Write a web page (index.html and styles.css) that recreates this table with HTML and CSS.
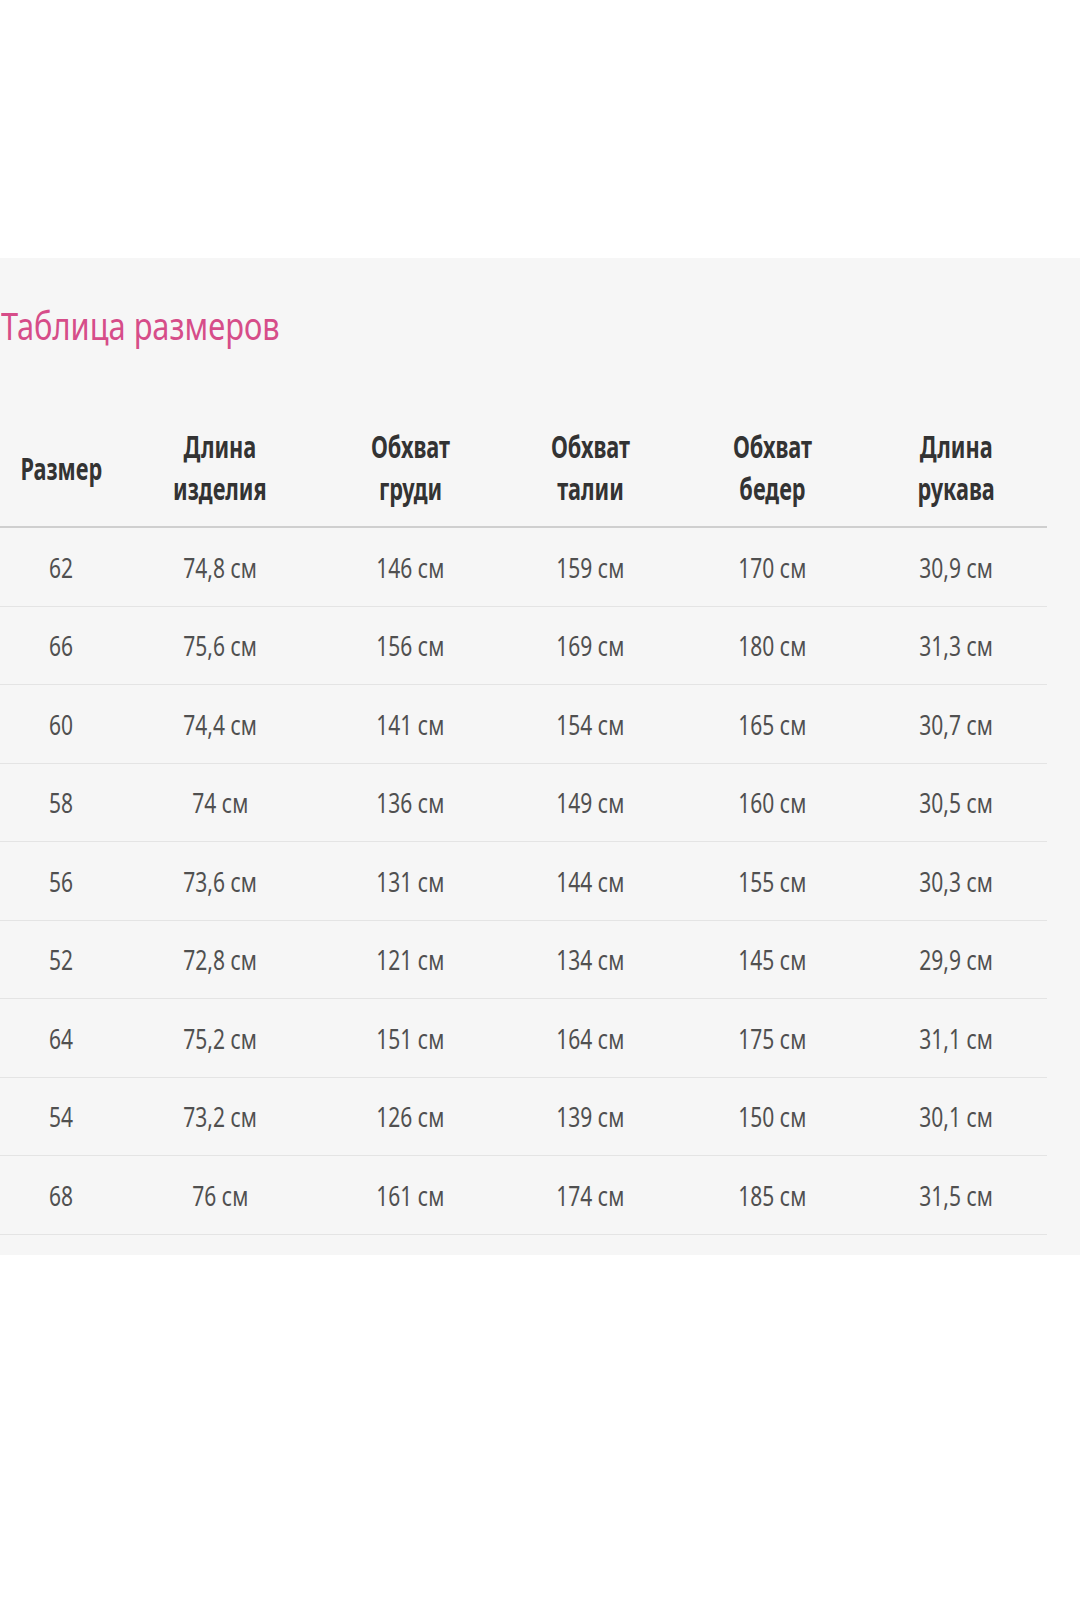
FILE: index.html
```html
<!DOCTYPE html>
<html lang="ru">
<head>
<meta charset="utf-8">
<title>Таблица размеров</title>
<link rel="stylesheet" href="styles.css">
</head>
<body>
<div class="page">
  <section class="panel">
    <h2 class="title"><span class="narrow">Таблица размеров</span></h2>
    <div class="table">
      <div class="row head">
        <div class="cell single"><span class="t">Размер</span></div>
        <div class="cell"><span class="t">Длина<br>изделия</span></div>
        <div class="cell"><span class="t">Обхват<br>груди</span></div>
        <div class="cell"><span class="t">Обхват<br>талии</span></div>
        <div class="cell"><span class="t">Обхват<br>бедер</span></div>
        <div class="cell"><span class="t">Длина<br>рукава</span></div>
      </div>
      <div class="row"><div class="cell"><span class="t">62</span></div><div class="cell"><span class="t">74,8 см</span></div><div class="cell"><span class="t">146 см</span></div><div class="cell"><span class="t">159 см</span></div><div class="cell"><span class="t">170 см</span></div><div class="cell"><span class="t">30,9 см</span></div></div>
      <div class="row"><div class="cell"><span class="t">66</span></div><div class="cell"><span class="t">75,6 см</span></div><div class="cell"><span class="t">156 см</span></div><div class="cell"><span class="t">169 см</span></div><div class="cell"><span class="t">180 см</span></div><div class="cell"><span class="t">31,3 см</span></div></div>
      <div class="row"><div class="cell"><span class="t">60</span></div><div class="cell"><span class="t">74,4 см</span></div><div class="cell"><span class="t">141 см</span></div><div class="cell"><span class="t">154 см</span></div><div class="cell"><span class="t">165 см</span></div><div class="cell"><span class="t">30,7 см</span></div></div>
      <div class="row"><div class="cell"><span class="t">58</span></div><div class="cell"><span class="t">74 см</span></div><div class="cell"><span class="t">136 см</span></div><div class="cell"><span class="t">149 см</span></div><div class="cell"><span class="t">160 см</span></div><div class="cell"><span class="t">30,5 см</span></div></div>
      <div class="row"><div class="cell"><span class="t">56</span></div><div class="cell"><span class="t">73,6 см</span></div><div class="cell"><span class="t">131 см</span></div><div class="cell"><span class="t">144 см</span></div><div class="cell"><span class="t">155 см</span></div><div class="cell"><span class="t">30,3 см</span></div></div>
      <div class="row"><div class="cell"><span class="t">52</span></div><div class="cell"><span class="t">72,8 см</span></div><div class="cell"><span class="t">121 см</span></div><div class="cell"><span class="t">134 см</span></div><div class="cell"><span class="t">145 см</span></div><div class="cell"><span class="t">29,9 см</span></div></div>
      <div class="row"><div class="cell"><span class="t">64</span></div><div class="cell"><span class="t">75,2 см</span></div><div class="cell"><span class="t">151 см</span></div><div class="cell"><span class="t">164 см</span></div><div class="cell"><span class="t">175 см</span></div><div class="cell"><span class="t">31,1 см</span></div></div>
      <div class="row"><div class="cell"><span class="t">54</span></div><div class="cell"><span class="t">73,2 см</span></div><div class="cell"><span class="t">126 см</span></div><div class="cell"><span class="t">139 см</span></div><div class="cell"><span class="t">150 см</span></div><div class="cell"><span class="t">30,1 см</span></div></div>
      <div class="row"><div class="cell"><span class="t">68</span></div><div class="cell"><span class="t">76 см</span></div><div class="cell"><span class="t">161 см</span></div><div class="cell"><span class="t">174 см</span></div><div class="cell"><span class="t">185 см</span></div><div class="cell"><span class="t">31,5 см</span></div></div>
    </div>
  </section>
</div>
</body>
</html>
```
FILE: styles.css
```css
html, body {
  margin: 0;
  padding: 0;
  background: #ffffff;
}
body {
  font-family: "Noto Sans", "DejaVu Sans", "Liberation Sans", sans-serif;
}
.page {
  padding-top: 258px;
}
.panel {
  background: #f6f6f6;
  padding: 44px 0 20px 0;
}
.title {
  margin: 0;
  padding-left: 1px;
  font-weight: normal;
  font-size: 39px;
  line-height: 46px;
  color: #d64d89;
}
.narrow {
  display: inline-block;
  transform: scaleX(0.79);
  transform-origin: left center;
}
.table {
  width: 1047px;
  margin-top: 77px;
}
.row {
  display: grid;
  grid-template-columns: 122px 196px 184px 176px 188px 181px;
  height: 77.5px;
  border-bottom: 1px solid #e4e4e4;
  align-items: center;
  color: #505050;
  font-size: 28px;
}
.row .cell {
  text-align: center;
}
.t {
  display: inline-block;
  transform: scaleX(0.75);
  transform-origin: center center;
}
.row.head {
  height: auto;
  padding-bottom: 17px;
  border-bottom: 2px solid #cfcfcf;
  color: #333333;
  font-weight: bold;
  font-size: 31px;
  line-height: 42px;
}
.row.head .t {
  transform: scaleX(0.7);
}
.row.head .single {
  padding-top: 2px;
}
```
